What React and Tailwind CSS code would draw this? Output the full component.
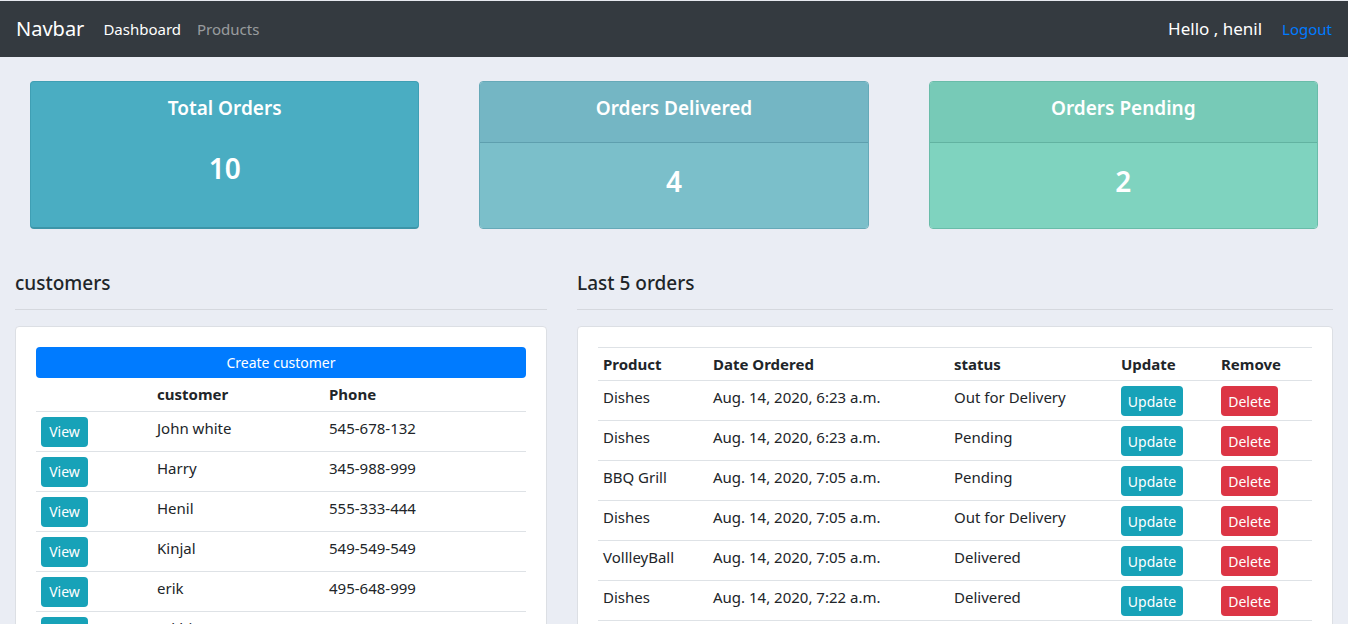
import React from "react";

const customers = [
  ["John white", "545-678-132"],
  ["Harry", "345-988-999"],
  ["Henil", "555-333-444"],
  ["Kinjal", "549-549-549"],
  ["erik", "495-648-999"],
  ["rakhi", "999-999-999"],
];

const orders = [
  ["Dishes", "Aug. 14, 2020, 6:23 a.m.", "Out for Delivery"],
  ["Dishes", "Aug. 14, 2020, 6:23 a.m.", "Pending"],
  ["BBQ Grill", "Aug. 14, 2020, 7:05 a.m.", "Pending"],
  ["Dishes", "Aug. 14, 2020, 7:05 a.m.", "Out for Delivery"],
  ["VollleyBall", "Aug. 14, 2020, 7:05 a.m.", "Delivered"],
  ["Dishes", "Aug. 14, 2020, 7:22 a.m.", "Delivered"],
  ["Dishes", "Aug. 14, 2020, 7:22 a.m.", "Delivered"],
];

export default function App() {
  return (
    <div
      className="min-h-screen bg-[#eaedf4] text-[#212529]"
      style={{ fontFamily: '"Noto Sans", "Open Sans", sans-serif' }}
    >
      <div className="h-px bg-[#e6e9ef]" />
      <nav className="h-[56px] bg-[#343a40] flex items-center px-4">
        <span className="text-[20px] text-white mr-[19px] leading-none">Navbar</span>
        <span className="text-[15px] text-white mr-4">Dashboard</span>
        <span className="text-[15px] text-white/50">Products</span>
        <div className="flex-1" />
        <span className="text-[17px] text-white mr-5">Hello , henil</span>
        <span className="text-[15px] text-[#007bff]">Logout</span>
      </nav>

      <div className="grid grid-cols-3 gap-[60px] px-[30px] pt-[24px]">
        <div className="h-[148px] rounded bg-[#4aadc2] border border-[#3f9fb4] border-b-2 border-b-[#3d95a8] flex flex-col items-center text-white">
          <div className="h-[40px] flex items-end text-[19px] font-semibold">Total Orders</div>
          <div className="mt-[25px] text-[28px] font-semibold">10</div>
        </div>
        <div className="h-[148px] rounded overflow-hidden border border-[#66a9b8] flex flex-col text-white">
          <div className="h-[61px] bg-[#74b6c4] border-b border-[#5e9fae] flex justify-center pt-[12px] text-[19px] font-semibold">
            Orders Delivered
          </div>
          <div className="flex-1 bg-[#7bbfca] flex justify-center pt-[17px] text-[28px] font-semibold">4</div>
        </div>
        <div className="h-[148px] rounded overflow-hidden border border-[#69bca9] flex flex-col text-white">
          <div className="h-[61px] bg-[#77cab7] border-b border-[#62b3a1] flex justify-center pt-[12px] text-[19px] font-semibold">
            Orders Pending
          </div>
          <div className="flex-1 bg-[#7fd3bf] flex justify-center pt-[17px] text-[28px] font-semibold">2</div>
        </div>
      </div>

      <div className="grid grid-cols-[562px_1fr] pt-[40px]">
        <div className="px-[15px]">
          <h5 className="text-[19px] font-medium h-[28px] leading-[28px]">customers</h5>
          <hr className="mt-[12px] mb-[16px] border-t border-[#d5d8de]" />
          <div className="bg-white rounded border border-[#dcdfe4] p-[20px] pb-0">
            <button className="w-full h-[31px] rounded bg-[#007bff] text-white text-[14px]">Create customer</button>
            <table className="w-full text-[15px] border-collapse">
              <thead>
                <tr className="h-[33px]">
                  <th className="w-[116px]"></th>
                  <th className="w-[172px] text-left font-bold px-[5px]">customer</th>
                  <th className="text-left font-bold px-[5px]">Phone</th>
                </tr>
              </thead>
              <tbody>
                {customers.map(([n, p], i) => (
                  <tr key={i} className="border-t border-[#dee2e6] h-[39px] align-top">
                    <td className="p-[5px] pb-[4px]">
                      <button className="w-[47px] h-[30px] rounded bg-[#17a2b8] text-white text-[14px]">View</button>
                    </td>
                    <td className="px-[5px] pt-[4px] pb-[5px] leading-[24px]">{n}</td>
                    <td className="px-[5px] pt-[4px] pb-[5px] leading-[24px]">{p}</td>
                  </tr>
                ))}
              </tbody>
            </table>
          </div>
        </div>

        <div className="px-[15px]">
          <h5 className="text-[19px] font-medium h-[28px] leading-[28px]">Last 5 orders</h5>
          <hr className="mt-[12px] mb-[16px] border-t border-[#d5d8de]" />
          <div className="bg-white rounded border border-[#dcdfe4] p-[20px] pb-0">
            <table className="w-full text-[15px] border-collapse">
              <thead>
                <tr className="h-[33px] border-t border-[#dee2e6]">
                  <th className="w-[110px] text-left font-bold px-[5px]">Product</th>
                  <th className="w-[241px] text-left font-bold px-[5px]">Date Ordered</th>
                  <th className="w-[167px] text-left font-bold px-[5px]">status</th>
                  <th className="w-[100px] text-left font-bold px-[5px]">Update</th>
                  <th className="text-left font-bold px-[5px]">Remove</th>
                </tr>
              </thead>
              <tbody>
                {orders.map(([p, d, s], i) => (
                  <tr key={i} className="border-t border-[#dee2e6] h-[39px] align-top">
                    <td className="px-[5px] pt-[4px] pb-[5px] leading-[24px]">{p}</td>
                    <td className="px-[5px] pt-[4px] pb-[5px] leading-[24px]">{d}</td>
                    <td className="px-[5px] pt-[4px] pb-[5px] leading-[24px]">{s}</td>
                    <td className="p-[5px] pb-[4px]">
                      <button className="w-[62px] h-[30px] rounded bg-[#17a2b8] text-white text-[14px]">Update</button>
                    </td>
                    <td className="p-[5px] pb-[4px]">
                      <button className="w-[57px] h-[30px] rounded bg-[#dc3545] text-white text-[14px]">Delete</button>
                    </td>
                  </tr>
                ))}
              </tbody>
            </table>
          </div>
        </div>
      </div>
    </div>
  );
}
